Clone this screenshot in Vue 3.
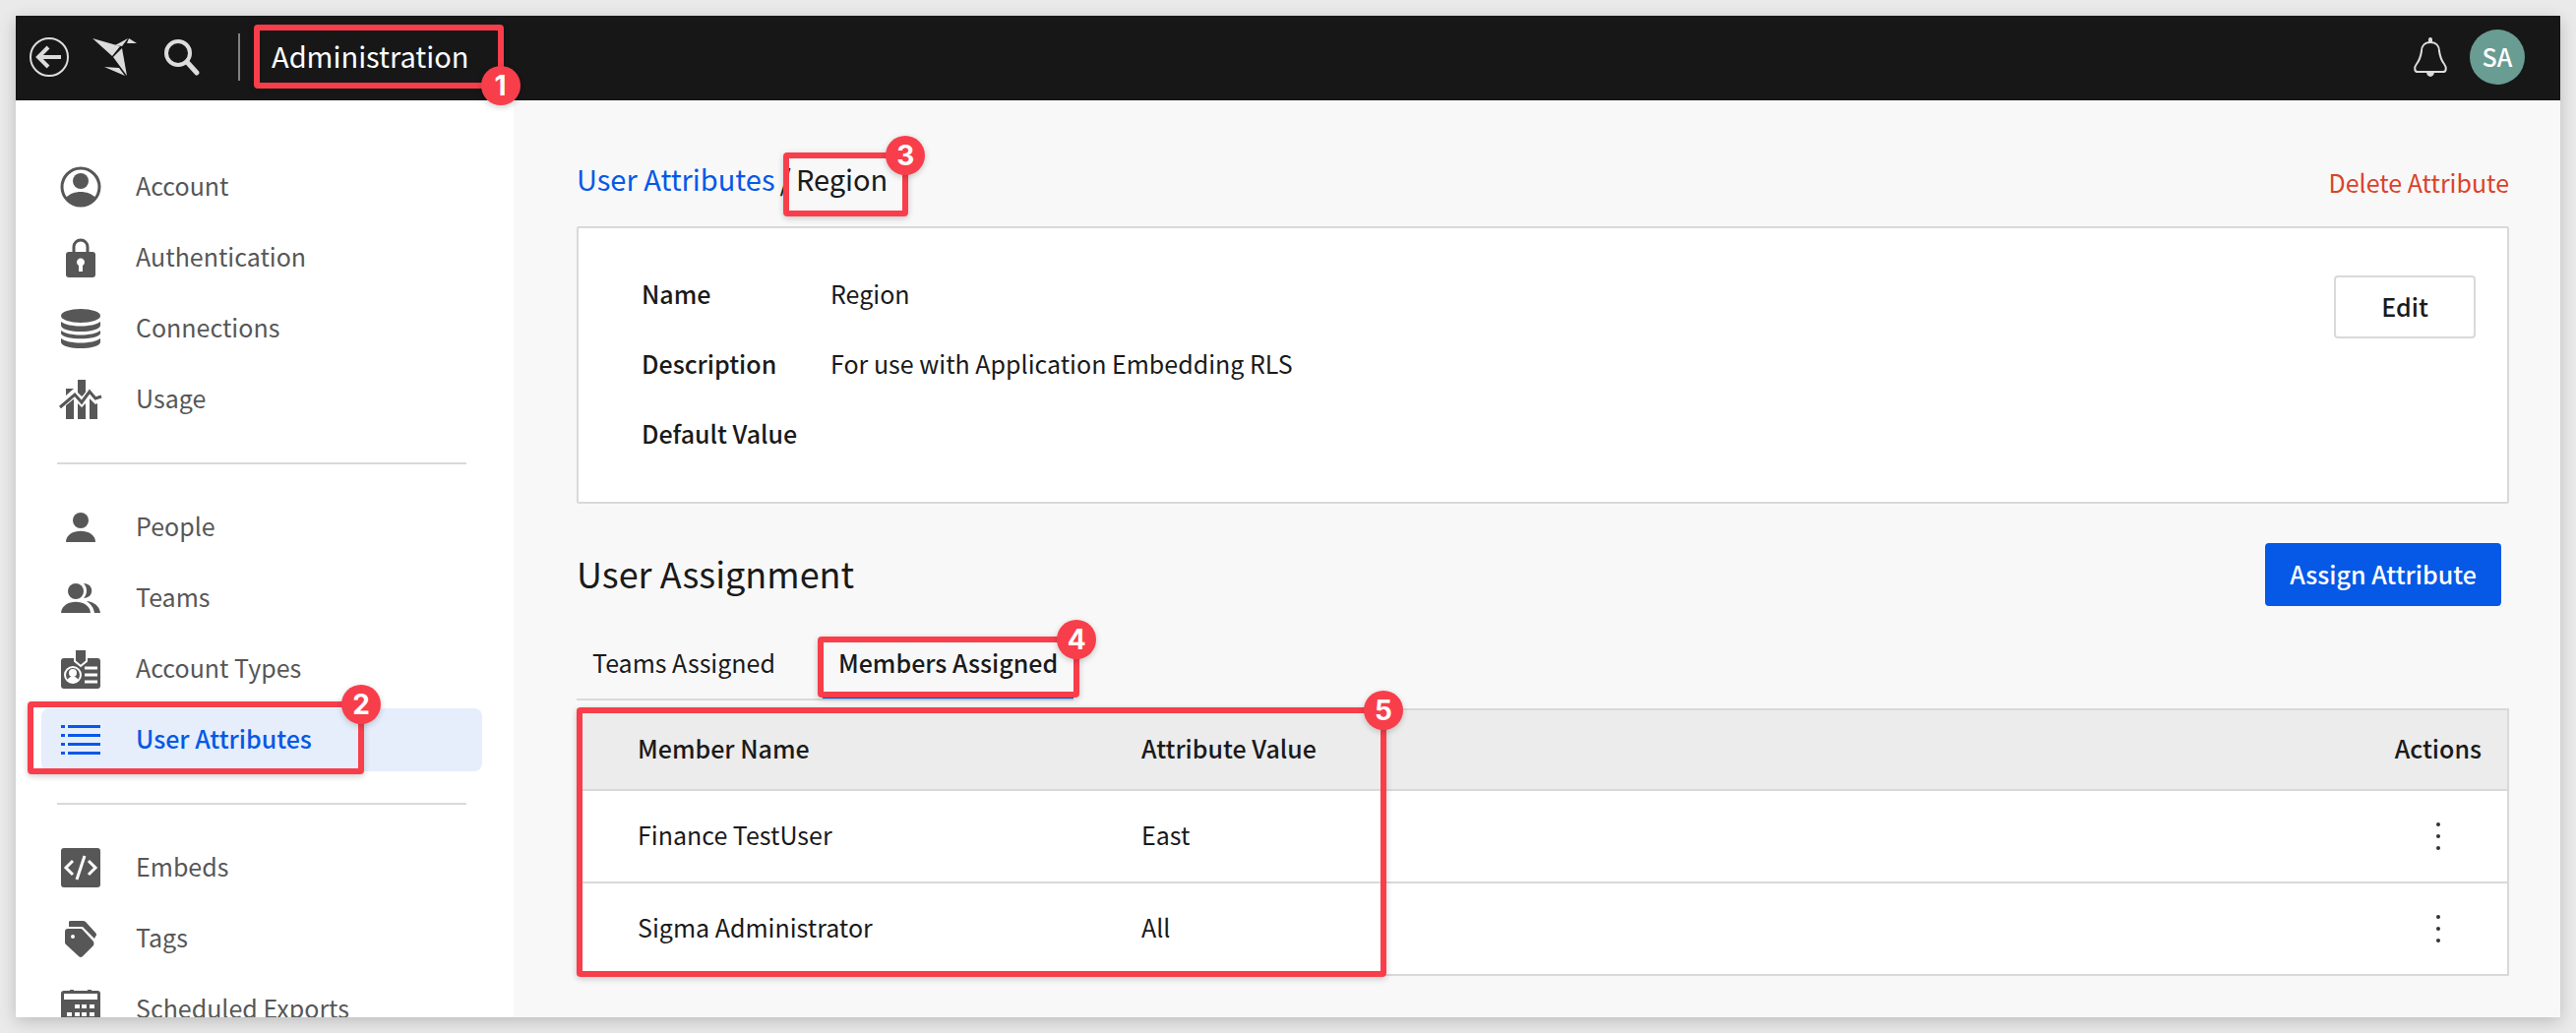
<script setup>
const groups = [
  [
    { label: 'Account', icon: 'account' },
    { label: 'Authentication', icon: 'lock' },
    { label: 'Connections', icon: 'database' },
    { label: 'Usage', icon: 'usage' },
  ],
  [
    { label: 'People', icon: 'person' },
    { label: 'Teams', icon: 'teams' },
    { label: 'Account Types', icon: 'badge' },
    { label: 'User Attributes', icon: 'list', active: true },
  ],
  [
    { label: 'Embeds', icon: 'embed' },
    { label: 'Tags', icon: 'tags' },
    { label: 'Scheduled Exports', icon: 'calendar' },
  ],
]
const details = [
  { label: 'Name', value: 'Region' },
  { label: 'Description', value: 'For use with Application Embedding RLS' },
  { label: 'Default Value', value: '' },
]
const members = [
  { name: 'Finance TestUser', value: 'East' },
  { name: 'Sigma Administrator', value: 'All' },
]
</script>

<template>
  <div class="page">
    <div class="window">
      <header class="topbar">
        <button class="icon-button" aria-label="Back">
          <svg width="40" height="40" viewBox="0 0 40 40" fill="none" stroke="#dcdcdc">
            <circle cx="20" cy="20" r="19" stroke-width="2" />
            <path d="M32 20H10M19 10L9 20L19 30" stroke-width="4" />
          </svg>
        </button>
        <button class="icon-button bird" aria-label="Home">
          <svg width="46" height="40" viewBox="0 0 46 40" fill="#dcdcdc">
            <path d="M0 1L28 9L20 19Z" />
            <path d="M21 20L30 11L35 39Z" />
            <path d="M23 8L36 1L30 9Z" />
            <path d="M37 1L45 6L35 6Z" />
            <path d="M12 30L27 31L33 39Z" />
          </svg>
        </button>
        <button class="icon-button" aria-label="Search">
          <svg width="38" height="40" viewBox="0 0 38 40" fill="none" stroke="#dcdcdc">
            <circle cx="15" cy="16" r="12" stroke-width="4" />
            <path d="M24 25L34 36" stroke-width="5" stroke-linecap="round" />
          </svg>
        </button>
        <span class="rule"></span>
        <div class="title">
          Administration
          <span class="mark mark-title"><b class="pin pin-bottom">1</b></span>
        </div>
        <button class="icon-button bell" aria-label="Notifications">
          <svg width="34" height="40" viewBox="0 0 34 40">
            <path d="M17 5C11 5 8 9 8 14C7 21 6 23 3 27C0 31 1 35 4 35H30C33 35 34 31 31 27C28 23 27 21 26 14C26 9 23 5 17 5Z" fill="none" stroke="#dcdcdc" stroke-width="2" />
            <path d="M15 5V2A2 2 0 0 1 19 2V5ZM13 35H21A4 5 0 0 1 13 35Z" fill="#dcdcdc" />
          </svg>
        </button>
        <button class="avatar">SA</button>
      </header>

      <div class="body">
        <nav class="sidebar">
          <ul v-for="(group, i) in groups" :key="i" class="group">
            <li v-for="item in group" :key="item.label">
              <a href="#" class="item" :class="{ active: item.active }">
                <svg class="glyph" width="40" height="40" viewBox="0 0 40 40" fill="currentColor">
                  <g v-if="item.icon === 'account'">
                    <circle cx="20" cy="20" r="19" fill="none" stroke="currentColor" stroke-width="3" />
                    <circle cx="20" cy="14" r="8" />
                    <path d="M5 31C12 23 28 23 35 31C28 42 12 42 5 31Z" />
                  </g>
                  <g v-else-if="item.icon === 'lock'">
                    <path d="M13 16V9A7 7 0 0 1 27 9V16" fill="none" stroke="currentColor" stroke-width="3" />
                    <rect x="5" y="14" width="30" height="26" rx="3" />
                    <path d="M18 34V28A4 4 0 1 1 22 28V34Z" fill="#fff" />
                  </g>
                  <g v-else-if="item.icon === 'database'">
                    <ellipse cx="20" cy="7" rx="20" ry="7" />
                    <path d="M0 13C8 19 32 19 40 13V17C38 25 2 25 0 17Z" />
                    <path d="M0 22C8 28 32 28 40 22V25C38 32 2 32 0 25Z" />
                    <path d="M0 30C8 36 32 36 40 30V34C38 42 2 42 0 34Z" />
                  </g>
                  <g v-else-if="item.icon === 'usage'">
                    <path d="M5 9H13L5 16ZM17 0H25V14L21 17L17 13ZM5 25L13 18V40H5ZM17 24L21 28L25 24V40H17ZM29 19L35 25L37 24V40H29Z" />
                    <path d="M-2 28L14 15L21 23L29 12L35 19L42 17" fill="none" stroke="#fff" stroke-width="6" />
                    <path d="M-1 28L14 15L21 23L29 12L35 19L41 17" fill="none" stroke="currentColor" stroke-width="3" />
                  </g>
                  <g v-else-if="item.icon === 'person'">
                    <circle cx="20" cy="13" r="8" />
                    <path d="M5 35C5 20 35 20 35 35Z" />
                  </g>
                  <g v-else-if="item.icon === 'teams'">
                    <circle cx="15" cy="13" r="8" />
                    <path d="M0 35C1 20 29 20 30 35Z" />
                    <path d="M23 5C34 5 34 20 23 20C27 16 27 9 23 5ZM26 23C34 24 39 28 40 35H34C33 29 30 26 26 23Z" />
                  </g>
                  <g v-else-if="item.icon === 'badge'">
                    <rect y="9" width="40" height="31" rx="3" />
                    <path d="M14 0H26V12L20 17L14 12Z" stroke="#fff" stroke-width="2" />
                    <circle cx="12" cy="26" r="8" fill="none" stroke="#fff" stroke-width="2" />
                    <circle cx="12" cy="24" r="4" fill="#fff" />
                    <path d="M6 32C8 26 16 26 18 32C14 35 10 35 6 32Z" fill="#fff" />
                    <path d="M24 19H37M24 26H37M24 33H37" stroke="#fff" stroke-width="3" />
                  </g>
                  <g v-else-if="item.icon === 'list'">
                    <path d="M0 5H4V8H0ZM7 5H40V8H7ZM0 14H4V17H0ZM7 14H40V17H7ZM0 23H4V26H0ZM7 23H40V26H7ZM0 32H4V35H0ZM7 32H40V35H7Z" />
                  </g>
                  <g v-else-if="item.icon === 'embed'">
                    <rect width="40" height="40" rx="3" />
                    <path d="M12 13L5 20L12 27M28 13L35 20L28 27M24 8L16 32" fill="none" stroke="#fff" stroke-width="3" />
                  </g>
                  <g v-else-if="item.icon === 'tags'">
                    <path d="M8 7V3Q8 2 10 2H22Q24 2 25 3L35 14Q37 16 35 18L34 20L22 8H8Z" />
                    <path fill-rule="evenodd" d="M4 13Q4 10 7 10H20Q21 10 22 11L33 23Q34 25 33 27L22 38Q20 40 18 38L5 26Q4 25 4 24ZM12 16A2 2 0 1 0 12 20A2 2 0 1 0 12 16Z" />
                  </g>
                  <g v-else>
                    <rect y="1" width="40" height="39" rx="3" />
                    <path d="M9 0H13V2H9ZM27 0H31V2H27Z" />
                    <path d="M3 4H37V10H3ZM14 15H19V19H14ZM21 15H26V19H21ZM29 15H34V19H29ZM6 23H11V27H6ZM14 23H19V27H14ZM21 23H26V27H21ZM29 23H34V27H29Z" fill="#fff" />
                  </g>
                </svg>
                <span class="label">{{ item.label }}</span>
                <span v-if="item.active" class="mark mark-item"><b class="pin">2</b></span>
              </a>
            </li>
          </ul>
        </nav>

        <main class="content">
          <div class="heading">
            <div class="crumbs">
              <a href="#">User Attributes</a>
              <span>/</span>
              <span class="current">Region<span class="mark mark-crumb"><b class="pin">3</b></span></span>
            </div>
            <button class="delete">Delete Attribute</button>
          </div>

          <section class="card">
            <dl class="details">
              <div v-for="row in details" :key="row.label" class="detail">
                <dt>{{ row.label }}</dt>
                <dd>{{ row.value }}</dd>
              </div>
            </dl>
            <button class="edit">Edit</button>
          </section>

          <div class="section-head">
            <h2>User Assignment</h2>
            <button class="assign">Assign Attribute</button>
          </div>

          <div class="tabs" role="tablist">
            <button class="tab" role="tab">Teams Assigned</button>
            <button class="tab selected" role="tab" aria-selected="true">
              Members Assigned
              <span class="mark mark-tab"><b class="pin">4</b></span>
            </button>
          </div>

          <div class="table-wrap">
            <table>
              <thead>
                <tr>
                  <th>Member Name</th>
                  <th>Attribute Value</th>
                  <th class="actions">Actions</th>
                </tr>
              </thead>
              <tbody>
                <tr v-for="m in members" :key="m.name">
                  <td>{{ m.name }}</td>
                  <td>{{ m.value }}</td>
                  <td class="actions">
                    <button class="more" :aria-label="'Actions for ' + m.name">
                      <svg width="28" height="28" viewBox="0 0 28 28" fill="#333">
                        <circle cx="14" cy="2" r="2" />
                        <circle cx="14" cy="14" r="2" />
                        <circle cx="14" cy="26" r="2" />
                      </svg>
                    </button>
                  </td>
                </tr>
              </tbody>
            </table>
            <span class="mark mark-table"><b class="pin">5</b></span>
          </div>
        </main>
      </div>
    </div>
  </div>
</template>

<style>
body {
  background: #eaeaea;
}
</style>

<style scoped>
* {
  box-sizing: border-box;
}
.page {
  height: 100vh;
  padding: 16px;
  font-family: "Noto Sans CJK SC", "Noto Sans", sans-serif;
  font-size: 25px;
  line-height: 36px;
  color: #1a1a1a;
}
.window {
  display: flex;
  flex-direction: column;
  height: 100%;
  background: #f8f8f8;
  box-shadow: 0 4px 16px rgba(0, 0, 0, 0.2);
}
button {
  padding: 0;
  border: 0;
  background: none;
  color: inherit;
  font: inherit;
  cursor: pointer;
}
a {
  color: #0559e6;
  text-decoration: none;
}
svg {
  display: block;
  overflow: visible;
}
.topbar {
  display: flex;
  flex: none;
  align-items: center;
  height: 86px;
  padding: 0 36px 2px 14px;
  background: #171717;
  color: #fff;
}
.bird {
  margin: 0 26px 0 24px;
}
.rule {
  width: 2px;
  height: 48px;
  margin: 0 32px 0 38px;
  background: #808080;
}
.title {
  position: relative;
  padding-bottom: 4px;
  font-size: 29px;
}
.bell {
  margin-left: auto;
}
.avatar {
  width: 56px;
  height: 56px;
  margin-left: 23px;
  padding-bottom: 2px;
  border-radius: 50%;
  background: #699c92;
  font-weight: 500;
}
.body {
  display: flex;
  flex: 1;
  min-height: 0;
}
.sidebar {
  flex: none;
  width: 506px;
  padding: 56px 32px 0 26px;
  overflow: hidden;
  background: #fff;
}
.group {
  display: flex;
  flex-direction: column;
  gap: 8px;
  margin: 0;
  padding: 0;
  list-style: none;
}
.group + .group::before {
  content: "";
  height: 2px;
  margin: 32px 16px 24px;
  background: #d9d9d9;
}
.item {
  position: relative;
  display: flex;
  align-items: center;
  gap: 36px;
  height: 64px;
  padding-left: 20px;
  border-radius: 8px;
  color: #575757;
}
.item.active {
  background: #e6eefc;
  color: #0559e6;
  font-weight: 500;
}
.label {
  padding-bottom: 4px;
}
.content {
  flex: 1;
  min-width: 0;
  padding: 56px 52px 0 64px;
}
.heading {
  display: flex;
  align-items: center;
  justify-content: space-between;
  height: 48px;
  margin-bottom: 24px;
}
.crumbs {
  display: flex;
  gap: 5px;
  padding-bottom: 2px;
  font-size: 29px;
}
.current {
  position: relative;
}
.delete {
  padding-top: 6px;
  color: #d9432a;
}
.card {
  display: flex;
  align-items: flex-start;
  justify-content: space-between;
  height: 282px;
  padding: 48px 32px 0 64px;
  border: 2px solid #d9d9d9;
  border-radius: 2px;
  background: #fff;
}
.details {
  margin: 0;
}
.detail {
  display: flex;
  height: 71px;
}
dt {
  width: 192px;
  font-weight: 500;
}
dd {
  margin: 0;
}
.edit {
  width: 144px;
  height: 64px;
  padding-bottom: 2px;
  border: 2px solid #d9d9d9;
  border-radius: 4px;
  font-weight: 500;
}
.section-head {
  display: flex;
  align-items: center;
  justify-content: space-between;
  height: 64px;
  margin: 40px 8px 0 0;
}
h2 {
  margin: 0;
  padding-bottom: 4px;
  font-size: 36px;
  font-weight: 400;
}
.assign {
  min-width: 240px;
  height: 64px;
  padding-bottom: 2px;
  border-radius: 4px;
  background: #0559e6;
  color: #fff;
  font-weight: 500;
}
.tabs {
  display: inline-flex;
  height: 64px;
  margin: 32px 0 8px;
  border-bottom: 2px solid #d9d9d9;
}
.tab {
  position: relative;
  padding: 0 16px 8px;
  border-bottom: 4px solid transparent;
}
.tab + .tab {
  margin-left: 32px;
}
.selected {
  border-bottom-color: #0559e6;
  font-weight: 500;
}
.table-wrap {
  position: relative;
}
table {
  width: 100%;
  border: 2px solid #d9d9d9;
  border-spacing: 0;
  background: #fff;
}
th,
td {
  height: 92px;
  padding: 0 26px 4px 0;
  text-align: left;
}
th {
  height: 82px;
  border-bottom: 2px solid #d9d9d9;
  background: #ececec;
  font-weight: 500;
}
tr + tr td {
  height: 94px;
  border-top: 2px solid #d9d9d9;
}
th:first-child,
td:first-child {
  width: 572px;
  padding-left: 60px;
}
.actions {
  text-align: right;
}
td.actions {
  padding-bottom: 0;
}
.more {
  display: block;
  margin: 0 30px 0 auto;
}
.mark {
  position: absolute;
  z-index: 1;
  border: 6px solid #f83e4b;
  border-radius: 4px;
  box-shadow: 0 2px 6px rgba(0, 0, 0, 0.2);
  pointer-events: none;
}
.pin {
  position: absolute;
  top: -23px;
  right: -23px;
  width: 40px;
  height: 40px;
  border-radius: 50%;
  background: #f83e4b;
  box-shadow: 0 2px 6px rgba(0, 0, 0, 0.2);
  color: #fff;
  font-family: Inter, sans-serif;
  font-size: 28px;
  font-weight: 700;
  line-height: 40px;
  text-align: center;
}
.pin-bottom {
  top: auto;
  bottom: -23px;
}
.mark-title {
  inset: -13px -35px -12px -18px;
}
.mark-item {
  inset: -7px 120px -3px -14px;
}
.mark-crumb {
  inset: -8px -21px -21px -13px;
}
.mark-tab {
  inset: -1px -6px -3px -5px;
}
.mark-table {
  inset: -1px auto -1px 0;
  width: 823px;
}
</style>
